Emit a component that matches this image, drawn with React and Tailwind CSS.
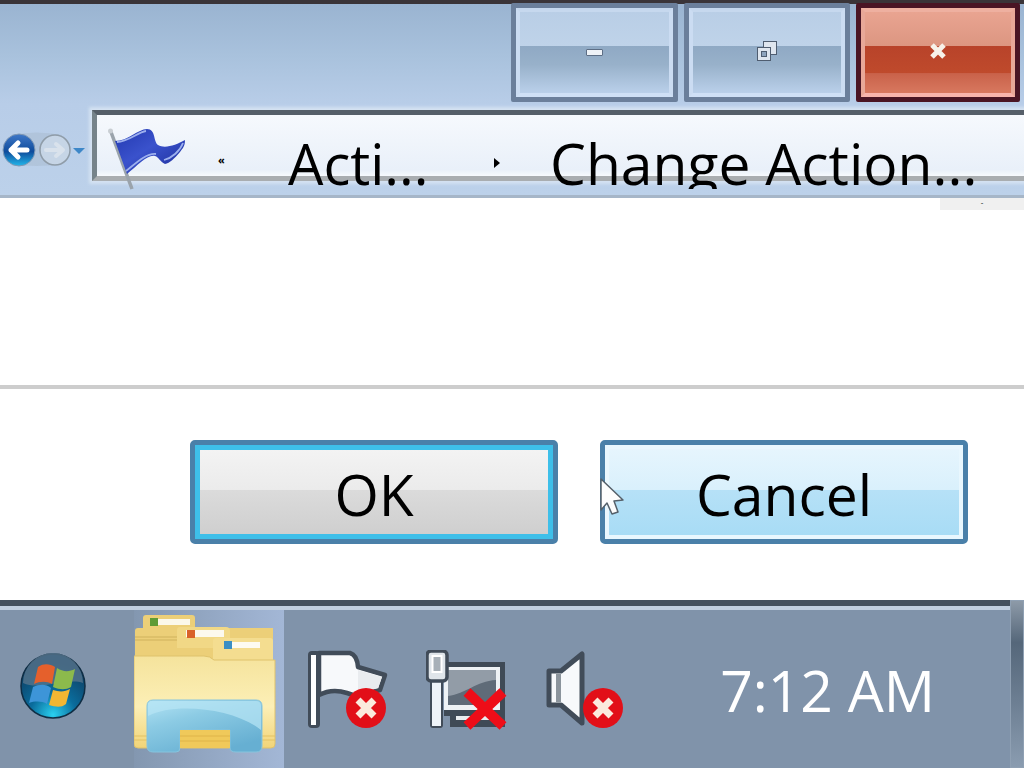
import React from 'react';

const font = { fontFamily: '"Open Sans", "Noto Sans", sans-serif' };

function WinButton({ close, width, children }) {
  const outer = close ? 'border-[#4a1524]' : 'border-[#6b7f9b]';
  const inner = close ? 'border-x-[#e8a898] border-t-[#eeb0a0] border-b-[#f8b4ac]' : 'border-x-[#cbdcf2] border-t-[#c6d8ee] border-b-[#cfe0f6]';
  const face = close
    ? 'bg-[linear-gradient(#e9a491_0%,#dc9681_42%,#b8432a_42%,#bf4a2c_75%,#c9624a_76%,#d8785f_100%)]'
    : 'bg-[linear-gradient(#b9cee6_0%,#bfd3e9_42%,#8fa9c4_42%,#98b1ca_65%,#bad0ea_100%)]';
  return (
    <div className={`${width} h-[99px] border-[5px] rounded-[2px] ${outer}`}>
      <div className={`w-full h-full border-[4px] flex items-center justify-center ${inner} ${face}`}>
        {children}
      </div>
    </div>
  );
}

function NavButtons() {
  return (
    <svg width="88" height="40" viewBox="0 0 88 40" className="shrink-0">
      <defs>
        <linearGradient id="back" x1="0" y1="0" x2="0" y2="1">
          <stop offset="0" stopColor="#3f78c8" />
          <stop offset="0.55" stopColor="#0f4c9c" />
          <stop offset="1" stopColor="#22b6ea" />
        </linearGradient>
      </defs>
      <path d="M12 6 Q36 1 62 6 V35 Q36 39 12 35 Z" fill="#a9bbd0" opacity="0.55" />
      <circle cx="19" cy="21" r="16" fill="url(#back)" stroke="#8098b4" strokeWidth="1" />
      <path d="M11 21 H27 M18 14 L11 21 L18 28" fill="none" stroke="#fff" strokeWidth="5" strokeLinecap="round" strokeLinejoin="round" />
      <circle cx="55" cy="21" r="15" fill="#c6d5e6" stroke="#8f9ca8" strokeWidth="1.5" />
      <path d="M46 21 H62 M56 15 L63 21 L56 27" fill="none" stroke="#d9e2ec" strokeWidth="4" strokeLinecap="round" strokeLinejoin="round" />
      <path d="M73 19 H85 L79 25 Z" fill="#3d87c8" />
    </svg>
  );
}

function BlueFlag() {
  return (
    <svg width="80" height="64" viewBox="0 0 80 64" className="shrink-0">
      <defs>
        <linearGradient id="flagBlue" x1="0" y1="0" x2="1" y2="1">
          <stop offset="0" stopColor="#2238b0" />
          <stop offset="0.45" stopColor="#3a52cc" />
          <stop offset="1" stopColor="#1c2c98" />
        </linearGradient>
      </defs>
      <path d="M3 5 L24 62" stroke="#9aa3ab" strokeWidth="3.5" />
      <circle cx="2.5" cy="4" r="2.5" fill="#c9ced3" />
      <path d="M7 14 C20 14 30 2 39 2 C48 2 45 14 50 18 C57 22 68 18 77 13 C77 20 74 22 72 25 C66 32 62 36 57 37 C52 35 51 30 47 29 C40 27 30 38 19 47 Z" fill="url(#flagBlue)" />
      <path d="M9 15 C20 15 30 5 38 4 M18 44 C28 36 38 26 48 27 M56 33 C64 31 72 24 75 16" fill="none" stroke="#9db0ee" strokeWidth="1.8" />
    </svg>
  );
}

function Orb() {
  return (
    <svg width="66" height="66" viewBox="0 0 66 66">
      <defs>
        <radialGradient id="orb" cx="0.5" cy="0.95" r="0.8">
          <stop offset="0" stopColor="#2ad0f0" />
          <stop offset="0.45" stopColor="#0a6c9c" />
          <stop offset="1" stopColor="#0e3f63" />
        </radialGradient>
      </defs>
      <circle cx="33" cy="33" r="32" fill="url(#orb)" stroke="#0f2d44" strokeWidth="1.5" />
      <path d="M3 30 A30 30 0 0 1 63 30 C48 24 20 38 3 30Z" fill="#56748c" opacity="0.8" />
      <path d="M18 14 C24 10 30 11 35 14 L32 31 C27 28 20 28 14 31 Z" fill="#e5602c" />
      <path d="M37 15 C43 19 49 19 55 16 L51 34 C46 37 40 37 33 34 Z" fill="#8cba4c" />
      <path d="M13 34 C20 31 26 31 31 35 L27 51 C22 48 15 48 9 50 Z" fill="#3d95d8" />
      <path d="M33 37 C39 39 45 39 50 36 L46 51 C41 55 36 54 29 52 Z" fill="#f2b632" />
    </svg>
  );
}

function Explorer() {
  return (
    <svg width="142" height="142" viewBox="0 0 142 142">
      <defs>
        <linearGradient id="folderBody" x1="0" y1="0" x2="0" y2="1">
          <stop offset="0" stopColor="#f5e39c" />
          <stop offset="0.55" stopColor="#fcefb6" />
          <stop offset="1" stopColor="#f1d478" />
        </linearGradient>
        <linearGradient id="folderBlue" x1="0" y1="0" x2="0.6" y2="1">
          <stop offset="0" stopColor="#b4e4f4" />
          <stop offset="0.4" stopColor="#8ccbe4" />
          <stop offset="1" stopColor="#66afd2" />
        </linearGradient>
      </defs>
      <path d="M9 16 V6 Q9 3 12 3 H58 Q61 3 61 6 V16 H139 V50 H1 V19 Q1 16 4 16 Z" fill="#eccf78" />
      <rect x="18" y="7" width="38" height="6" fill="#fbf8ea" />
      <rect x="16" y="6" width="8" height="8" fill="#5e9b36" />
      <path d="M1 25 H43 M1 28 H43" stroke="#cfb25c" strokeWidth="1" />
      <path d="M43 36 V18 Q43 15 46 15 H92 Q96 15 96 19 V36 Z" fill="#f1d886" />
      <rect x="52" y="18" width="38" height="7" fill="#fcf9ee" />
      <rect x="53" y="18" width="8" height="8" fill="#d9622a" />
      <path d="M79 48 V29 Q79 26 82 26 H136 Q139 26 139 29 V48 Z" fill="#f4dd90" />
      <rect x="90" y="30" width="36" height="6" fill="#fdfbf2" />
      <rect x="90" y="29" width="8" height="8" fill="#3b8fc4" />
      <path d="M0 44 H70 Q76 44 80 48 H141 V132 Q141 136 137 136 H4 Q0 136 0 132 Z" fill="url(#folderBody)" stroke="#dfc26c" strokeWidth="1" />
      <path d="M0 124 H13 M0 128 H13 M128 124 H141 M128 128 H141" stroke="#e3c262" strokeWidth="1" />
      <path d="M13 94 Q13 88 19 88 H122 Q128 88 128 94 V134 Q128 140 122 140 H102 Q96 140 96 136 V118 H46 V136 Q46 140 42 140 H19 Q13 140 13 134 Z" fill="url(#folderBlue)" stroke="#86c4de" strokeWidth="1" />
      <path d="M14 104 C40 90 100 96 127 118 V94 Q127 89 122 89 H19 Q14 89 14 94 Z" fill="#b8e6f5" opacity="0.7" />
      <rect x="46" y="118" width="50" height="18" fill="#f0c95a" />
      <path d="M46 124 H96 M46 129 H96" stroke="#dfb448" strokeWidth="1" />
    </svg>
  );
}

function RedBadge({ cx, cy }) {
  return (
    <g>
      <circle cx={cx} cy={cy} r="20" fill="#e20f18" />
      <path d={`M${cx - 8} ${cy - 8} L${cx + 8} ${cy + 8} M${cx + 8} ${cy - 8} L${cx - 8} ${cy + 8}`} stroke="#fbeadd" strokeWidth="7" />
    </g>
  );
}

function ActionFlag() {
  return (
    <svg width="82" height="80" viewBox="0 0 82 80">
      <path d="M13 3 H44 Q51 5 52 17 L79 25 L74 40 L50 46 L41 43 Q26 38 13 45 Z" fill="#f7f9fb" stroke="#414c59" strokeWidth="4.5" strokeLinejoin="round" />
      <path d="M52 20 L76 27 L72 38 L52 44 Z" fill="#e9ecef" />
      <rect x="2" y="1" width="12" height="77" rx="4" fill="#414c59" />
      <rect x="5" y="5" width="5" height="70" fill="#fff" />
      <RedBadge cx={60} cy={58} />
    </svg>
  );
}

function Network() {
  return (
    <svg width="82" height="80" viewBox="0 0 82 80">
      <path d="M18 12 H79 V77 H24 L24 66 H18 Z" fill="#3f4a56" />
      <path d="M18 17 H74 V60 H18 Z" fill="#eef2f5" />
      <path d="M22 20 H70 V55 H22 Z" fill="#5f6b78" />
      <path d="M22 20 H70 V30 C50 31 40 44 22 46 Z" fill="#929ca7" />
      <rect x="30" y="66" width="40" height="4" fill="#e8ecef" />
      <rect x="4" y="28" width="13" height="50" rx="3" fill="#414c59" />
      <rect x="6" y="30" width="9" height="46" fill="#eef3f8" />
      <rect x="1" y="1" width="20" height="30" rx="4" fill="#dfe5ea" stroke="#414c59" strokeWidth="3.5" />
      <rect x="6.5" y="6" width="9" height="16" fill="#a7b0b8" stroke="#fff" strokeWidth="2" />
      <path d="M41 42 L77 76 M77 42 L41 76" stroke="#ee0d18" strokeWidth="10" />
    </svg>
  );
}

function Speaker() {
  return (
    <svg width="80" height="80" viewBox="0 0 80 80">
      <path d="M3 21 H15 L36 4 V73 L15 55 H3 Z" fill="#f7f9fb" stroke="#414c59" strokeWidth="5" strokeLinejoin="round" />
      <path d="M10 24 H15 V52 H10 Z" fill="#8b949c" />
      <RedBadge cx={57} cy={58} />
    </svg>
  );
}

function Cursor() {
  return (
    <svg width="26" height="40" viewBox="0 0 26 40" className="absolute left-[600px] top-[477px]">
      <path d="M1 2 L1 33 L7 26 L12 37 L18 35 L14 24 L23 23 Z" fill="#fdfdfd" stroke="#55606a" strokeWidth="1.5" strokeLinejoin="round" />
    </svg>
  );
}

export default function App() {
  return (
    <div className="relative w-[1024px] h-[768px] overflow-hidden flex flex-col bg-white" style={font}>
      <div className="h-[4px] shrink-0 bg-[#3a3438]" />
      <div className="h-[191px] shrink-0 flex flex-col bg-[linear-gradient(#9ab4d1_0%,#a9c2dd_28%,#b8cde8_52%,#bcd1ea_100%)]">
        <div className="h-[100px] -mt-[1px] flex justify-end items-start gap-[6px] pr-[4px]">
          <WinButton width="w-[167px]">
            <div className="w-[17px] h-[7px] bg-[#eef2f7] border border-[#5d6e85] rounded-[1px]" />
          </WinButton>
          <WinButton width="w-[166px]">
            <svg width="22" height="22" viewBox="0 0 22 22" className="mb-[3px]">
              <rect x="7.5" y="1.5" width="13" height="13" fill="#dfe6ef" stroke="#4f5d70" />
              <rect x="1.5" y="7.5" width="13" height="13" fill="#dfe6ef" stroke="#4f5d70" />
              <rect x="5.5" y="11.5" width="5" height="5" fill="#8ea4bd" stroke="#4f5d70" />
            </svg>
          </WinButton>
          <WinButton close width="w-[164px]">
            <svg width="18" height="18" viewBox="0 0 18 18" className="mb-[3px]">
              <path d="M3 3 L15 15 M15 3 L3 15" stroke="#f7f2ea" strokeWidth="5" />
            </svg>
          </WinButton>
        </div>
        <div className="h-[92px] flex items-start pt-[7px]">
          <div className="mt-[19px] w-[88px] shrink-0 mr-[4px]"><NavButtons /></div>
          <div className="relative flex-1 h-[71px] border-t-[5px] border-l-[5px] border-b-[5px] border-t-[#565f69] border-l-[#76838a] border-b-[#a9adb0] shadow-[0_0_3px_3px_#d4e2f2] bg-[linear-gradient(#f6f9fd_0%,#e9f0f9_90%,#f7fafd_100%)] flex items-start">
            <div className="mt-[12px] ml-[11px] w-[80px] shrink-0"><BlueFlag /></div>
            <div className="text-[11px] font-bold leading-none text-black mt-[39px] ml-[30px] w-[70px] shrink-0">«</div>
            <div className="h-[74px] w-[143px] shrink-0 overflow-hidden text-[56px] leading-[96px] text-black whitespace-nowrap">Acti...</div>
            <div className="w-0 h-0 mt-[43px] ml-[63px] shrink-0 border-y-[5px] border-y-transparent border-l-[6px] border-l-black" />
            <div className="h-[74px] ml-[50px] overflow-hidden text-[57px] leading-[96px] text-black whitespace-nowrap">Change Action...</div>
          </div>
        </div>
      </div>
      <div className="h-[3px] shrink-0 bg-[#a6b6c8]" />
      <div className="h-[187px] shrink-0 flex justify-end items-start">
        <div className="w-[84px] h-[12px] bg-[#f0f0f0] text-[8px] leading-[8px] text-center text-black">-</div>
      </div>
      <div className="h-[4px] shrink-0 bg-[#cdcdcd]" />
      <div className="h-[211px] shrink-0 flex justify-end items-start pt-[51px] pr-[56px] gap-[42px]">
        <div className="w-[368px] h-[104px] border-[5px] border-[#4a80a9] rounded-[5px]">
          <div className="w-full h-full border-[5px] border-[#3ebfe9] flex items-center justify-center pt-[5px] text-[57px] leading-none text-black bg-[linear-gradient(#f3f3f3_0%,#ebebeb_48%,#dbdbdb_48%,#cfcfcf_100%)]">OK</div>
        </div>
        <div className="w-[368px] h-[104px] border-[5px] border-[#4a80a9] rounded-[5px]">
          <div className="w-full h-full border-[4px] border-[#e9f7fe] flex items-center justify-center pt-[5px] text-[57px] leading-none text-black bg-[linear-gradient(#e6f5fd_0%,#d9f0fc_48%,#b6e1f7_48%,#a8dcf5_100%)]">Cancel</div>
        </div>
      </div>
      <div className="flex-1 flex flex-col">
        <div className="h-[6px] shrink-0 bg-[#44525f]" />
        <div className="h-[4px] shrink-0 bg-[#c0d0e0]" />
        <div className="flex-1 flex items-stretch bg-[#8093aa]">
          <div className="w-[134px] shrink-0 flex items-center pl-[20px] pb-[6px]"><Orb /></div>
          <div className="w-[150px] shrink-0 bg-[linear-gradient(90deg,#8397b0_0%,#a3b7d6_100%)] flex justify-center pt-[2px] pr-[8px]"><Explorer /></div>
          <div className="flex items-start pt-[40px] pl-[22px] gap-[38px]">
            <ActionFlag />
            <Network />
            <Speaker />
          </div>
          <div className="flex-1 flex items-center justify-end pr-[75px] pt-[3px] text-[57px] leading-none text-white whitespace-nowrap">7:12 AM</div>
          <div className="w-[14px] shrink-0 -mt-[10px] border border-[#8fa0b3] bg-[linear-gradient(#8d9aa8_0%,#55677a_25%,#6c7e92_60%,#8a9cb0_100%)]" />
        </div>
      </div>
      <Cursor />
    </div>
  );
}
